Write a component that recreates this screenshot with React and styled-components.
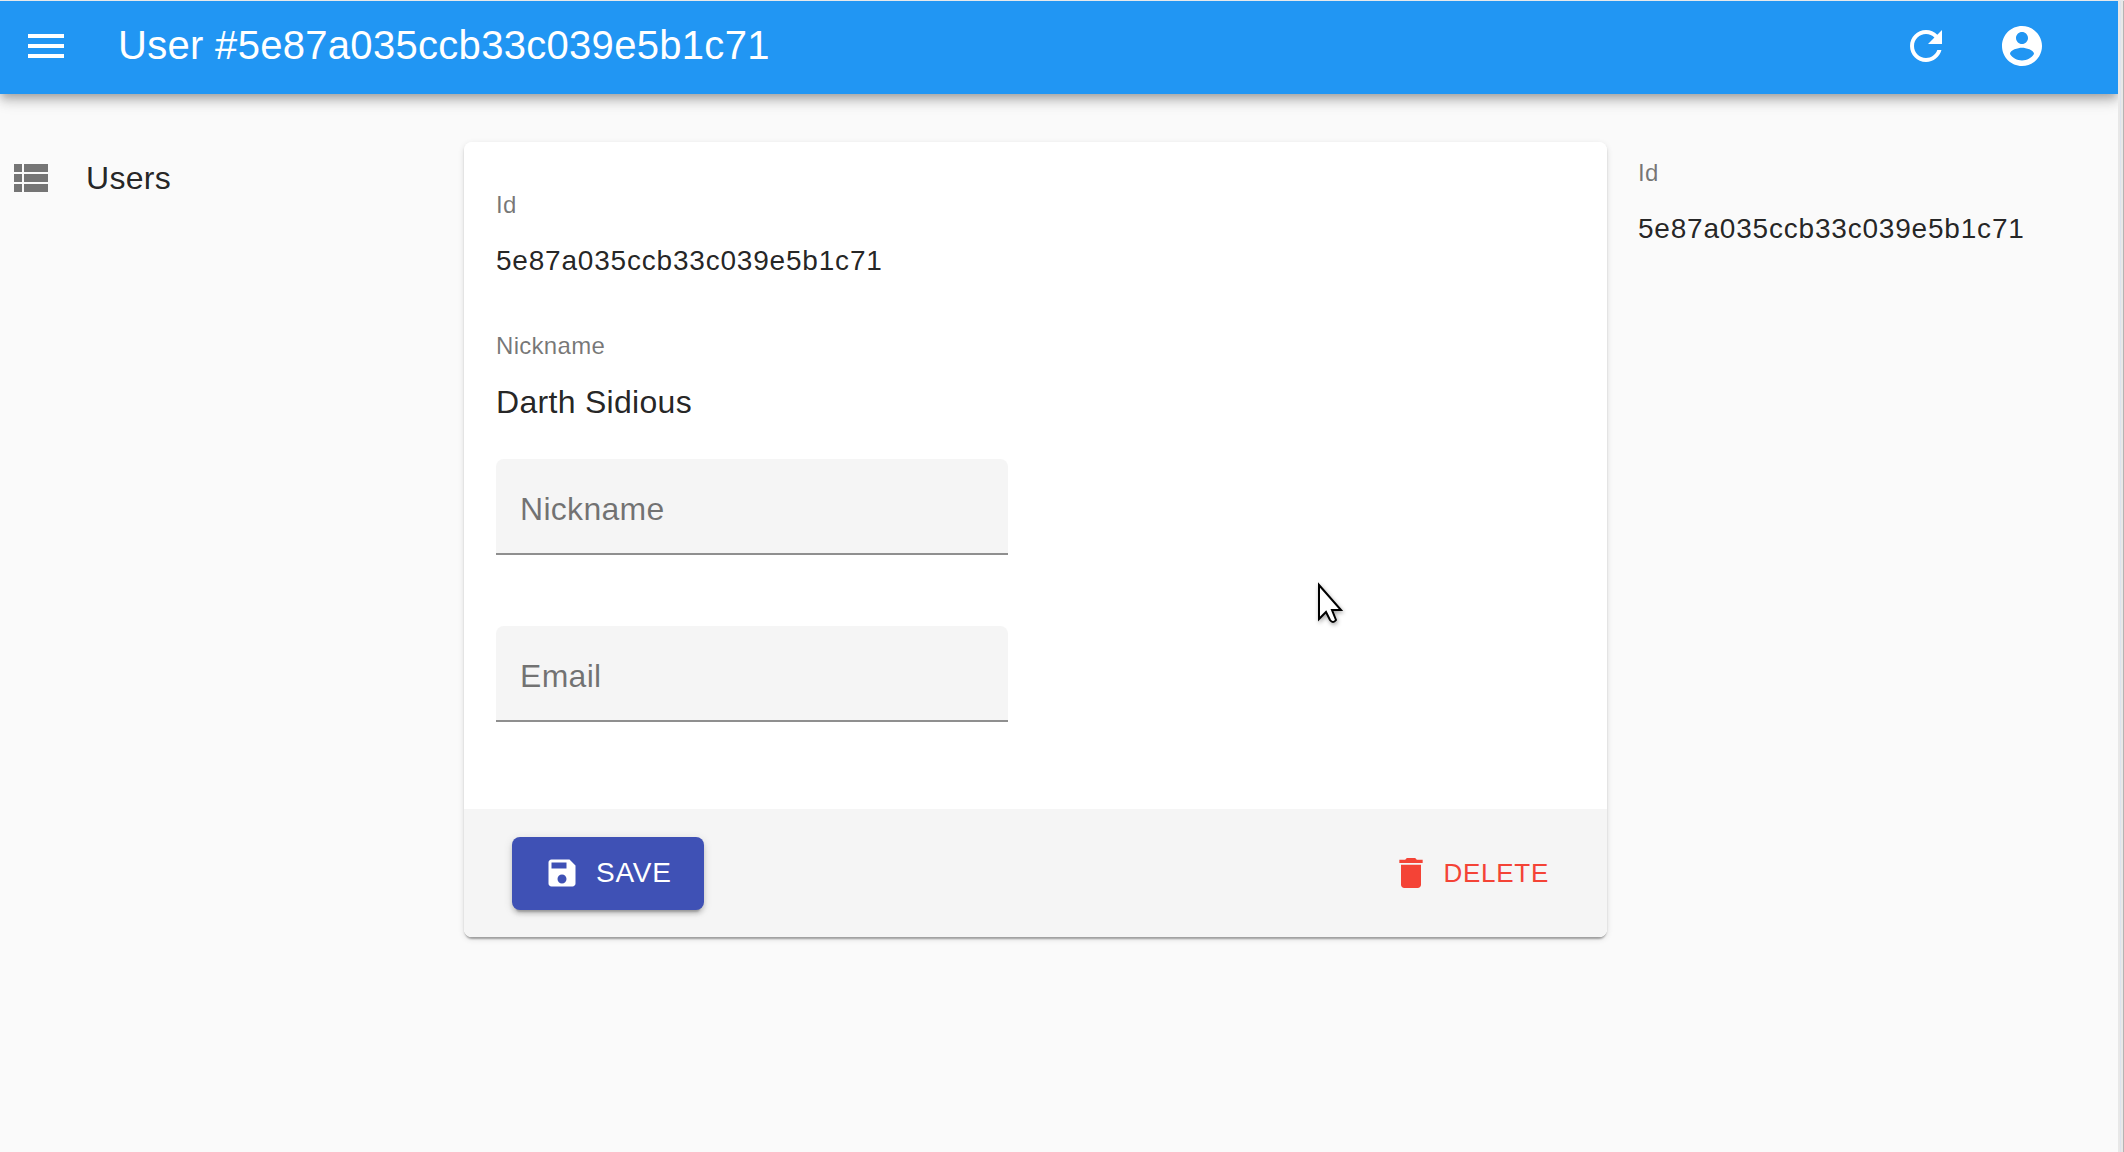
import React from "react";
import styled, { createGlobalStyle } from "styled-components";

const GlobalStyle = createGlobalStyle`
  *, *::before, *::after { box-sizing: border-box; }
  body {
    margin: 0;
    background: #fafafa;
    color: rgba(0, 0, 0, 0.87);
    font-family: "Liberation Sans", Arial, sans-serif;
    font-size: 32px;
    line-height: 48px;
    letter-spacing: 0.00938em;
  }
`;

const Window = styled.div`
  min-height: 100vh;
  display: flex;
  border-top: 1px solid #e6e8ea;
`;

const Page = styled.div`
  flex: 1;
  min-width: 0;
  overflow: hidden;
`;

const WindowEdge = styled.div`
  width: 6px;
  background: linear-gradient(to right, #e8e8e8 2px, #dde3ee 2px, #dde3ee 3px, #e8e8e8 3px);
  border-right: 1px solid #b4b4b4;
`;

const AppBar = styled.header`
  display: flex;
  align-items: center;
  height: 93px;
  padding: 0 48px 3px 22px;
  background: #2196f3;
  color: #fff;
  box-shadow: 0 4px 8px -2px rgba(0, 0, 0, 0.2), 0 8px 10px 0 rgba(0, 0, 0, 0.14),
    0 2px 20px 0 rgba(0, 0, 0, 0.12);
`;

const Title = styled.h1`
  flex: 1;
  margin: 0 0 2px 48px;
  font-size: 40px;
  font-weight: 400;
  line-height: 64px;
  letter-spacing: 0.0075em;
`;

const IconButton = styled.button`
  display: flex;
  padding: ${(p) => (p.$flush ? "0" : "0 24px")};
  border: 0;
  background: none;
  color: inherit;
  cursor: pointer;
`;

const Icon = styled.svg`
  display: block;
  flex: none;
  width: ${(p) => p.$size}px;
  height: ${(p) => p.$size}px;
  fill: currentColor;
`;

const Layout = styled.div`
  display: grid;
  grid-template-columns: 464px minmax(0, 1fr) 511px;
  align-items: start;
  padding-top: 48px;
`;

const MenuLink = styled.a`
  display: flex;
  align-items: center;
  gap: 32px;
  margin-top: 12px;
  padding-left: 6px;
  color: inherit;
  text-decoration: none;

  svg { color: #757575; }
`;

const Card = styled.form`
  overflow: hidden;
  border-radius: 8px;
  background: #fff;
`;

const CardShadow = styled.main`
  border-radius: 8px;
  box-shadow: 0 4px 2px -2px rgba(0, 0, 0, 0.2), 0 2px 2px 0 rgba(0, 0, 0, 0.14),
    0 2px 6px 0 rgba(0, 0, 0, 0.12);
`;

const CardContent = styled.div`
  padding: 47px 32px 87px;
`;

const Aside = styled.aside`
  padding: 15px 31px;
`;

const Facts = styled.dl`
  margin: 0;
`;

const Fact = styled.div`
  & + & { margin-top: 45px; }
`;

const Term = styled.dt`
  font-size: 24px;
  line-height: 32px;
  color: rgba(0, 0, 0, 0.54);
`;

const Value = styled.dd`
  margin: 16px 0 0;
  overflow-wrap: anywhere;
`;

const IdValue = styled(Value)`
  font-size: 28px;
  letter-spacing: 0.02857em;
`;

const Field = styled.div`
  position: relative;
  width: 512px;
  max-width: 100%;
  margin-top: ${(p) => (p.$first ? "33px" : "71px")};

  label {
    position: absolute;
    left: 24px;
    top: 26px;
    color: rgba(0, 0, 0, 0.54);
    pointer-events: none;
  }

  input {
    display: block;
    width: 100%;
    height: 96px;
    padding: 40px 24px 12px;
    border: 0;
    border-bottom: 2px solid #8f8f8f;
    border-radius: 8px 8px 0 0;
    background: #f5f5f5;
    font: inherit;
    color: inherit;
    outline: 0;
  }

  input:focus + label,
  input:not(:placeholder-shown) + label {
    top: 4px;
    font-size: 24px;
    line-height: 36px;
  }
`;

const Toolbar = styled.div`
  display: flex;
  align-items: center;
  justify-content: space-between;
  min-height: 128px;
  padding: 0 48px;
  background: #f5f5f5;
`;

const Button = styled.button`
  display: flex;
  align-items: center;
  border: 0;
  border-radius: 8px;
  font-family: inherit;
  letter-spacing: 0.02857em;
  text-transform: uppercase;
  cursor: pointer;
`;

const SaveButton = styled(Button)`
  gap: 16px;
  height: 73px;
  padding: 0 32px;
  background: #3f51b5;
  color: #fff;
  font-size: 28px;
  box-shadow: 0 6px 2px -4px rgba(0, 0, 0, 0.2), 0 4px 4px 0 rgba(0, 0, 0, 0.14),
    0 2px 10px 0 rgba(0, 0, 0, 0.12);
`;

const DeleteButton = styled(Button)`
  gap: 12px;
  height: 60px;
  padding: 0 10px;
  background: transparent;
  color: #f44336;
  font-size: 26px;
`;

const Pointer = styled.svg`
  position: absolute;
  left: 1315px;
  top: 580px;
  width: 32px;
  height: 48px;
  pointer-events: none;
  filter: drop-shadow(1px 2px 2px rgba(0, 0, 0, 0.35));
`;

const paths = {
  menu: "M3 18h18v-2H3v2zm0-5h18v-2H3v2zm0-7v2h18V6H3z",
  refresh:
    "M17.65 6.35C16.2 4.9 14.21 4 12 4c-4.42 0-7.99 3.58-7.99 8s3.57 8 7.99 8c3.73 0 6.84-2.55 7.73-6h-2.08c-.82 2.33-3.04 4-5.65 4-3.31 0-6-2.69-6-6s2.69-6 6-6c1.66 0 3.14.69 4.22 1.78L13 11h7V4l-2.35 2.35z",
  account:
    "M12 2C6.48 2 2 6.48 2 12s4.48 10 10 10 10-4.48 10-10S17.52 2 12 2zm0 3c1.66 0 3 1.34 3 3s-1.34 3-3 3-3-1.34-3-3 1.34-3 3-3zm0 14.2c-2.5 0-4.71-1.28-6-3.22.03-1.99 4-3.08 6-3.08 1.99 0 5.97 1.09 6 3.08-1.29 1.94-3.5 3.22-6 3.22z",
  list: "M4 14h4v-4H4v4zm0 5h4v-4H4v4zM4 9h4V5H4v4zm5 5h12v-4H9v4zm0 5h12v-4H9v4zM9 5v4h12V5H9z",
  save: "M17 3H5c-1.11 0-2 .9-2 2v14c0 1.1.89 2 2 2h14c1.1 0 2-.9 2-2V7l-4-4zm-5 16c-1.66 0-3-1.34-3-3s1.34-3 3-3 3 1.34 3 3-1.34 3-3 3zm3-10H5V5h10v4z",
  trash: "M6 19c0 1.1.9 2 2 2h8c1.1 0 2-.9 2-2V7H6v12zM19 4h-3.5l-1-1h-5l-1 1H5v2h14V4z",
};

function Glyph({ name, size = 48 }) {
  return (
    <Icon $size={size} viewBox="0 0 24 24" aria-hidden="true">
      <path d={paths[name]} />
    </Icon>
  );
}

function TextField({ id, label, type = "text", first }) {
  return (
    <Field $first={first}>
      <input id={id} type={type} placeholder=" " />
      <label htmlFor={id}>{label}</label>
    </Field>
  );
}

const userId = "5e87a035ccb33c039e5b1c71";

export default function App() {
  return (
    <Window>
      <GlobalStyle />
      <Page>
        <AppBar>
          <IconButton $flush aria-label="Open menu"><Glyph name="menu" /></IconButton>
          <Title>User #{userId}</Title>
          <IconButton aria-label="Refresh"><Glyph name="refresh" /></IconButton>
          <IconButton aria-label="Profile"><Glyph name="account" /></IconButton>
        </AppBar>
        <Layout>
          <nav>
            <MenuLink href="#users"><Glyph name="list" />Users</MenuLink>
          </nav>
          <CardShadow>
            <Card onSubmit={(e) => e.preventDefault()}>
              <CardContent>
                <Facts>
                  <Fact><Term>Id</Term><IdValue>{userId}</IdValue></Fact>
                  <Fact><Term>Nickname</Term><Value>Darth Sidious</Value></Fact>
                </Facts>
                <TextField id="nickname" label="Nickname" first />
                <TextField id="email" label="Email" type="email" />
              </CardContent>
              <Toolbar>
                <SaveButton type="submit"><Glyph name="save" size={36} />Save</SaveButton>
                <DeleteButton type="button"><Glyph name="trash" size={40} />Delete</DeleteButton>
              </Toolbar>
            </Card>
          </CardShadow>
          <Aside>
            <Facts>
              <Fact><Term>Id</Term><IdValue>{userId}</IdValue></Fact>
            </Facts>
          </Aside>
        </Layout>
      </Page>
      <WindowEdge />
      <Pointer viewBox="0 0 32 48" aria-hidden="true">
        <path d="M4 5V39L11 32L15 40Q18 44 21 40L17 30H26Z" fill="#fff" stroke="#000" strokeWidth="2" />
      </Pointer>
    </Window>
  );
}
